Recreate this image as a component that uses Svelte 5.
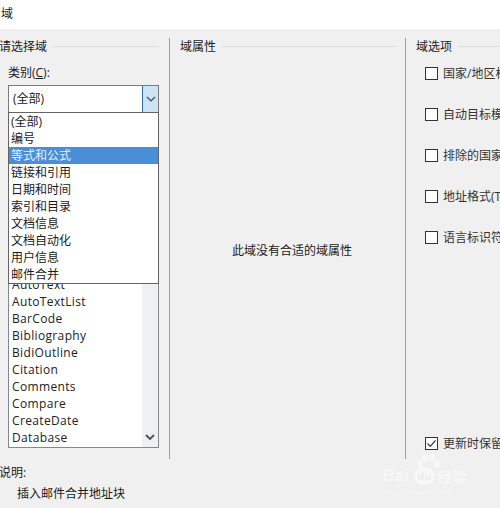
<script>
  const categories = ['(全部)', '编号', '等式和公式', '链接和引用', '日期和时间', '索引和目录', '文档信息', '文档自动化', '用户信息', '邮件合并'];
  const fields = ['AutoText', 'AutoTextList', 'BarCode', 'Bibliography', 'BidiOutline', 'Citation', 'Comments', 'Compare', 'CreateDate', 'Database'];
  const options = ['国家/地区标记', '自动目标模式', '排除的国家/地区', '地址格式(T)', '语言标识符'];
</script>

<div class="dialog">
  <header class="title">域</header>
  <main class="body">
    <section class="col left">
      <div class="legend legend-left"><span>请选择域</span><i></i></div>
      <div class="label">类别(<u>C</u>):</div>
      <div class="combo-wrap">
        <div class="combo">
          <span class="value">(全部)</span>
          <span class="arrow">
            <svg width="10" height="6" viewBox="0 0 10 6"><path d="M1 1l4 4 4-4" fill="none" stroke="#3c4a58" stroke-width="1.2"/></svg>
          </span>
        </div>
        <ul class="dropdown">
          {#each categories as c, i}
            <li class:sel={i === 2}>{c}</li>
          {/each}
        </ul>
      </div>
      <div class="listbox">
        <ul>
          {#each fields as f}<li>{f}</li>{/each}
        </ul>
        <div class="scroll">
          <svg width="10" height="7" viewBox="0 0 10 7"><path d="M1 1l4 4 4-4" fill="none" stroke="#505050" stroke-width="1.8"/></svg>
        </div>
      </div>
    </section>

    <section class="col middle">
      <div class="legend"><span>域属性</span><i></i></div>
      <div class="empty">此域没有合适的域属性</div>
    </section>

    <section class="col right">
      <div class="legend"><span>域选项</span><i></i></div>
      <div class="opts">
        {#each options as o}
          <div class="opt"><span class="box"></span><span class="opt-text">{o}</span></div>
        {/each}
      </div>
      <div class="opt keep">
        <span class="box">
          <svg width="11" height="11" viewBox="0 0 11 11"><path d="M1.5 5.5l2.8 2.8 5.2-6" fill="none" stroke="#333" stroke-width="1.2"/></svg>
        </span>
        <span class="opt-text">更新时保留格式</span>
      </div>
    </section>
  </main>
  <footer class="desc">
    <div class="desc-label">说明:</div>
    <div class="desc-text">插入邮件合并地址块</div>
  </footer>

  <div class="mark">
    <svg class="paw" width="26" height="16" viewBox="0 0 26 16" fill="#fff">
      <ellipse cx="5" cy="11" rx="3" ry="4"/><ellipse cx="10" cy="5" rx="3" ry="4"/><ellipse cx="17" cy="5" rx="3" ry="4"/><ellipse cx="22" cy="11" rx="3" ry="4"/>
    </svg>
    <div class="mark-main"><b>Bai</b><b class="du">du</b><span>经验</span></div>
    <div class="mark-sub">jingyan.baidu.com</div>
  </div>
</div>

<style>
  :global(body) { margin: 0; background: #f0f0f0; }
  .dialog {
    position: relative;
    width: 500px;
    height: 508px;
    overflow: hidden;
    background: #f0f0f0;
    color: #1a1a1a;
    font: 12px/17px "Open Sans", "Noto Sans CJK SC", sans-serif;
  }
  ul { list-style: none; margin: 0; padding: 0; }
  .title {
    height: 29px;
    background: #fff;
    padding-left: 1px;
    padding-top: 5px;
    box-sizing: border-box;
    line-height: 17px;
  }
  .body {
    display: flex;
    height: 430px;
    padding-top: 9px;
    box-sizing: border-box;
  }
  .col { box-sizing: border-box; }
  .left { width: 170px; border-right: 1px solid #a0a0a0; padding-right: 10px; }
  .middle { width: 236px; border-right: 1px solid #a0a0a0; padding: 0 9px 0 10px; display: flex; flex-direction: column; }
  .right { flex: 1; min-width: 0; padding-left: 10px; display: flex; flex-direction: column; overflow: hidden; }
  .legend { display: flex; align-items: center; gap: 6px; height: 17px; white-space: nowrap; }
  .legend-left { margin-left: -1px; }
  .legend i { flex: 1; height: 1px; background: #dcdcdc; }
  .label { margin: 9px 0 0 8px; height: 17px; }
  .combo-wrap { position: relative; margin: 4px 0 0 8px; }
  .combo {
    height: 28px;
    box-sizing: border-box;
    border: 1px solid #7a7a7a;
    background: #fff;
    display: flex;
    align-items: center;
    justify-content: space-between;
    padding: 0 0 2px 4px;
  }
  .arrow {
    width: 16px;
    height: 26px;
    margin-bottom: -2px;
    box-sizing: border-box;
    background: #cde4f7;
    border-left: 1px solid #2f6da3;
    display: flex;
    align-items: center;
    justify-content: center;
  }
  .dropdown {
    position: absolute;
    z-index: 2;
    top: 27px;
    left: 0;
    right: 0;
    background: #fff;
    border: 1px solid #646464;
  }
  .dropdown li { height: 17px; padding-left: 2px; }
  .dropdown li.sel { background: #4a8fd6; color: #e4f0fb; }
  .listbox {
    display: flex;
    margin: 25px 0 0 8px;
    height: 310px;
    box-sizing: border-box;
    border: 1px solid #828790;
    background: #fff;
    align-items: stretch;
  }
  .listbox ul {
    flex: 1;
    padding: 137px 0 0 3px;
    letter-spacing: 0.35px;
    color: #222;
  }
  .scroll {
    width: 16px;
    background: #f0f0f0;
    display: flex;
    align-items: flex-end;
    justify-content: center;
    padding-bottom: 6px;
    box-sizing: border-box;
  }
  .empty { margin: 187px 0 0 52px; white-space: nowrap; }
  .opts { display: flex; flex-direction: column; gap: 24px; margin-top: 10px; padding-left: 9px; color: #333; }
  .opt { display: flex; align-items: center; gap: 5px; height: 17px; white-space: nowrap; }
  .box {
    width: 11px;
    height: 11px;
    flex: none;
    border: 1px solid #333;
    background: #fff;
    display: block;
  }
  .box svg { display: block; }
  .keep { margin-top: auto; margin-bottom: 7px; padding-left: 9px; color: #333; }
  .desc-label { height: 17px; margin-top: 5px; margin-left: -1px; }
  .desc-text { margin: 4px 0 0 17px; height: 17px; }
  .mark {
    position: absolute;
    left: 383px;
    top: 453px;
    width: 92px;
    color: #fff;
    opacity: 0.5;
  }
  .paw { position: absolute; left: 32px; top: 0; }
  .mark-main { display: flex; align-items: center; margin-top: 14px; height: 18px; font: 700 16px/18px "Liberation Sans", sans-serif; letter-spacing: 0.5px; }
  .mark-main b { font-weight: 700; }
  .mark-main .du { font-size: 11px; background: #fff; color: #e8e8e8; border-radius: 9px; padding: 0 3px; margin: 0 3px 0 5px; }
  .mark-main span { font: 700 14px/18px "Noto Sans CJK SC", sans-serif; }
  .mark-sub { font: 9px/11px "Liberation Serif", serif; margin-top: 2px; opacity: .7; }
</style>
